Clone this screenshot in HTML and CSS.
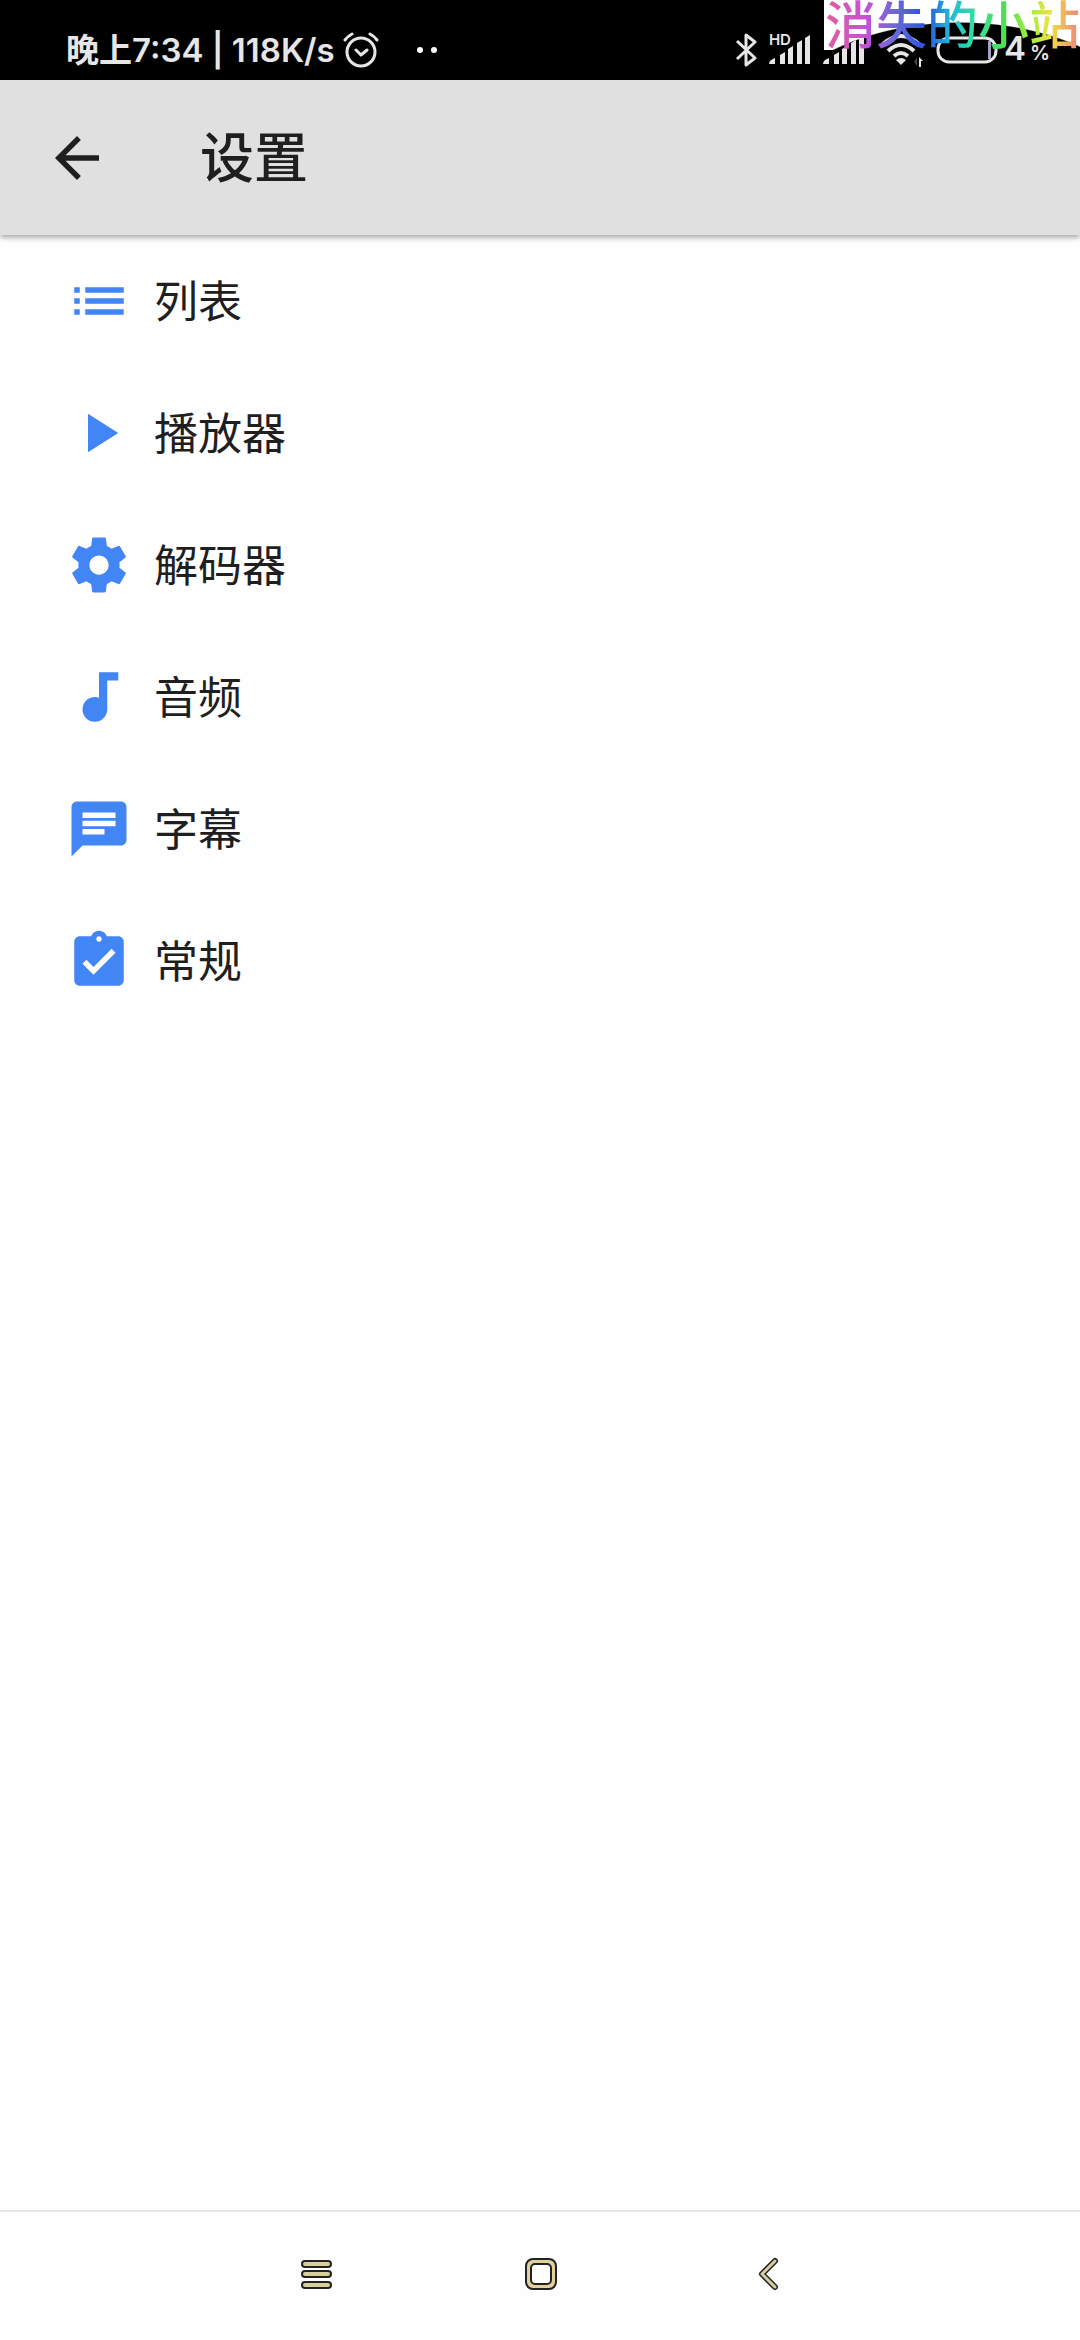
FILE: index.html
```html
<!DOCTYPE html>
<html lang="zh-CN">
<head>
<meta charset="utf-8">
<meta name="viewport" content="width=device-width">
<title>设置</title>
<link rel="stylesheet" href="styles.css">
</head>
<body>
<div class="status">
  <div class="status-left">
    <span class="clock">晚上7:34 | 118K/s</span>
    <svg class="alarm" width="36" height="36" viewBox="0 0 36 36" fill="none" stroke="currentColor" stroke-width="3" stroke-linecap="round" stroke-linejoin="round"><circle cx="18" cy="20" r="14"/><path d="M2 8Q5 4 9 2M34 8Q31 4 27 2M13 18l5 5 6-5"/></svg>
    <svg class="dots" width="20" height="6" viewBox="0 0 20 6" fill="#fff"><circle cx="3" cy="3" r="3"/><circle cx="17" cy="3" r="3"/></svg>
  </div>
  <div class="stamp-back"></div>
  <div class="status-right">
    <svg width="22" height="36" viewBox="0 0 22 36" fill="none" stroke="currentColor" stroke-width="3" stroke-linejoin="round"><path d="M2 9L20 26L11 33V3L20 10L2 27"/></svg>
    <div class="signal">
      <span class="hd">HD</span>
      <svg width="42" height="30" viewBox="0 0 42 30" fill="currentColor"><path d="M0 29q0-4 6-6v6zM11 20l5-3v12h-5zM19 14l5-3v18h-5zM28 8l5-3v24h-5zM36 3l5-3v29h-5z"/></svg>
    </div>
    <div class="signal">
      <svg width="42" height="30" viewBox="0 0 42 30" fill="currentColor"><path d="M0 29q0-4 6-6v6zM11 20l5-3v12h-5zM19 14l5-3v18h-5zM28 8l5-3v24h-5zM36 3l5-3v29h-5z"/></svg>
    </div>
    <svg class="wifi" width="44" height="34" viewBox="0 0 44 34" fill="none" stroke="currentColor" stroke-width="4"><path d="M2 11Q20-5 38 11M7 18Q20 6 33 18M13 23Q20 17 27 23"/><path d="M15 27q5-4 10 0l-5 5z" fill="currentColor" stroke="none"/><path d="M38 34V24l4 4h-2v6z" fill="currentColor" stroke="none"/><path d="M36 24v9l-3-4z" fill="#444" stroke="none"/></svg>
    <svg class="battery" width="62" height="28" viewBox="0 0 62 28"><rect x="2" y="2" width="58" height="24" rx="11" fill="#000" stroke="currentColor" stroke-width="3"/><path d="M52 5h3v18h-3z" fill="#a79fc4"/></svg>
    <span class="level">4<small>%</small></span>
  </div>
  <span class="stamp">消失的小站</span>
</div>

<header class="appbar">
  <button class="back" aria-label="返回"><svg width="66" height="66" viewBox="0 0 24 24" fill="currentColor"><path d="M20 11H7.830l5.590-5.590L12 4l-8 8 8 8 1.410-1.410L7.830 13H20v-2z"/></svg></button>
  <h1>设置</h1>
</header>

<main>
  <ul class="menu">
    <li><a href="#list"><svg viewBox="0 0 24 24"><path d="M3 13h2v-2H3v2zm0 4h2v-2H3v2zm0-8h2V7H3v2zm4 4h14v-2H7v2zm0 4h14v-2H7v2zM7 7v2h14V7H7z"/></svg><span>列表</span></a></li>
    <li><a href="#player"><svg viewBox="0 0 24 24"><path d="M8 5v14l11-7z"/></svg><span>播放器</span></a></li>
    <li><a href="#decoder"><svg viewBox="0 0 24 24"><path d="M19.430 12.980c.04-.32.07-.64.07-.98s-.03-.66-.07-.98l2.110-1.650c.19-.15.24-.42.12-.64l-2-3.460c-.12-.22-.39-.3-.61-.22l-2.490 1c-.52-.4-1.080-.73-1.690-.98l-.38-2.650C14.460 2.180 14.250 2 14 2h-4c-.25 0-.46.18-.49.42l-.38 2.650c-.61.25-1.170.59-1.690.98l-2.490-1c-.23-.09-.49 0-.61.22l-2 3.460c-.13.22-.07.49.12.64l2.110 1.650c-.04.32-.07.65-.07.98s.03.66.07.98l-2.110 1.650c-.19.15-.24.42-.12.64l2 3.460c.12.22.39.3.61.22l2.490-1c.52.4 1.080.73 1.690.98l.38 2.650c.03.24.24.42.49.42h4c.25 0 .46-.18.49-.42l.38-2.650c.61-.25 1.170-.59 1.690-.98l2.490 1c.23.09.49 0 .61-.22l2-3.460c.12-.22.07-.49-.12-.64l-2.110-1.650zM12 15.500c-1.930 0-3.500-1.570-3.500-3.500s1.570-3.500 3.500-3.500 3.500 1.570 3.500 3.500-1.570 3.500-3.500 3.500z"/></svg><span>解码器</span></a></li>
    <li><a href="#audio"><svg viewBox="0 0 24 24"><path d="M12 3v9.280c-.47-.17-.97-.28-1.500-.28C8.010 12 6 14.010 6 16.500S8.010 21 10.500 21c2.310 0 4.200-1.750 4.450-4H15V6h4V3h-7z"/></svg><span>音频</span></a></li>
    <li><a href="#subtitle"><svg viewBox="0 0 24 24"><path d="M20 2H4c-1.100 0-1.990.9-1.990 2L2 22l4-4h14c1.100 0 2-.9 2-2V4c0-1.100-.9-2-2-2zM6 9h12v2H6V9zm8 5H6v-2h8v2zm4-6H6V6h12v2z"/></svg><span>字幕</span></a></li>
    <li><a href="#general"><svg viewBox="0 0 24 24"><path d="M19 3h-4.180C14.400 1.840 13.300 1 12 1c-1.300 0-2.400.84-2.820 2H5c-1.100 0-2 .9-2 2v14c0 1.100.9 2 2 2h14c1.100 0 2-.9 2-2V5c0-1.100-.9-2-2-2zm-7 0c.55 0 1 .45 1 1s-.45 1-1 1-1-.45-1-1 .45-1 1-1zm-2 14l-4-4 1.410-1.410L10 14.170l6.590-6.590L18 9l-8 8z"/></svg><span>常规</span></a></li>
  </ul>
</main>

<nav class="navbar">
  <button aria-label="最近任务"><svg width="40" height="40" viewBox="0 0 40 40" fill="#d8d09c" stroke="#222" stroke-width="2"><rect x="6" y="7" width="29" height="6" rx="3"/><rect x="6" y="17" width="29" height="6" rx="3"/><rect x="6" y="28" width="29" height="6" rx="3"/></svg></button>
  <button aria-label="主屏幕"><svg width="40" height="40" viewBox="0 0 40 40" stroke="#222" stroke-width="2"><rect x="6" y="5" width="30" height="30" rx="7" fill="#e4cf9f"/><rect x="11" y="10" width="20" height="20" rx="4" fill="#fff"/></svg></button>
  <button aria-label="返回"><svg width="40" height="40" viewBox="0 0 40 40" fill="none" stroke-linecap="round" stroke-linejoin="round"><path d="M31 7L18 20L31 33" stroke="#222" stroke-width="6"/><path d="M31 7L18 20L31 33" stroke="#d8cf9c" stroke-width="3"/></svg></button>
</nav>
</body>
</html>
```
FILE: styles.css
```css
* { box-sizing: border-box; }

body {
  margin: 0;
  min-height: 100vh;
  display: flex;
  flex-direction: column;
  background: #fefefe;
  color: #1f1f1f;
  font-family: Roboto, "Noto Sans CJK SC", sans-serif;
}

button {
  border: 0;
  padding: 0;
  background: none;
  color: inherit;
  display: flex;
  align-items: center;
  justify-content: center;
}

svg { display: block; flex: none; }

/* Status bar */
.status {
  position: relative;
  display: flex;
  justify-content: space-between;
  height: 80px;
  padding: 20px 30px 0 66px;
  background: #000;
  color: #e6e6e6;
  font-family: Inter, "Noto Sans CJK SC", sans-serif;
  font-weight: 600;
}

.status-left, .status-right {
  display: flex;
  align-items: center;
  white-space: nowrap;
}

.clock { font-size: 33px; line-height: 40px; }
.alarm { margin-left: 8px; }
.dots { margin-left: 38px; }

.status-right { position: relative; }
.signal { position: relative; margin-left: 12px; }

.hd {
  position: absolute;
  left: 0;
  top: -4px;
  font-size: 15px;
  line-height: 18px;
}

.wifi { margin-left: 16px; }
.battery { margin-left: 11px; }
.level { margin-left: 6px; font-size: 33px; line-height: 40px; }
.level small { margin-left: 4px; font-size: 20px; }

/* White corner label with a black dome rising into it */
.stamp-back {
  position: absolute;
  top: 0;
  right: 0;
  width: 256px;
  height: 50px;
  background: radial-gradient(ellipse 200px 120px at 136px 142px, #000 99%, #fff 100%);
}

.stamp {
  position: absolute;
  top: 0;
  right: 0;
  font-size: 51px;
  line-height: 52px;
  font-weight: 500;
  color: transparent;
  background: linear-gradient(90deg, #e0609a 0, #c850d8 40px, #6a6ad8 70px, #2a50e0 100px, #20b8d8 125px, #30e0a0 150px, #50e050 180px, #a0f040 205px, #f0e040 225px, #f09070 250px);
  -webkit-background-clip: text;
  background-clip: text;
}

/* App bar */
.appbar {
  position: relative;
  display: flex;
  align-items: center;
  height: 155px;
  padding: 0 44px;
  background: #e0e0e0;
  box-shadow: 0 2px 6px #0006;
}

.appbar h1 {
  margin: 0 0 0 90px;
  padding-top: 4px;
  font-size: 54px;
  line-height: 64px;
  font-weight: 500;
}

/* Settings list */
main { flex: 1; }

.menu {
  margin: 0;
  padding: 0;
  list-style: none;
}

.menu a {
  display: flex;
  align-items: center;
  gap: 22px;
  height: 132px;
  padding: 0 66px;
  color: inherit;
  font-size: 44px;
  line-height: 64px;
  text-decoration: none;
}

.menu span { padding-top: 4px; }

.menu svg {
  width: 66px;
  height: 66px;
  fill: #4285f4;
}

/* Navigation bar */
.navbar {
  display: flex;
  justify-content: center;
  gap: 144px;
  height: 130px;
  padding-bottom: 4px;
  border-top: 2px solid #e6e8e8;
}

.navbar button { width: 80px; }
```
